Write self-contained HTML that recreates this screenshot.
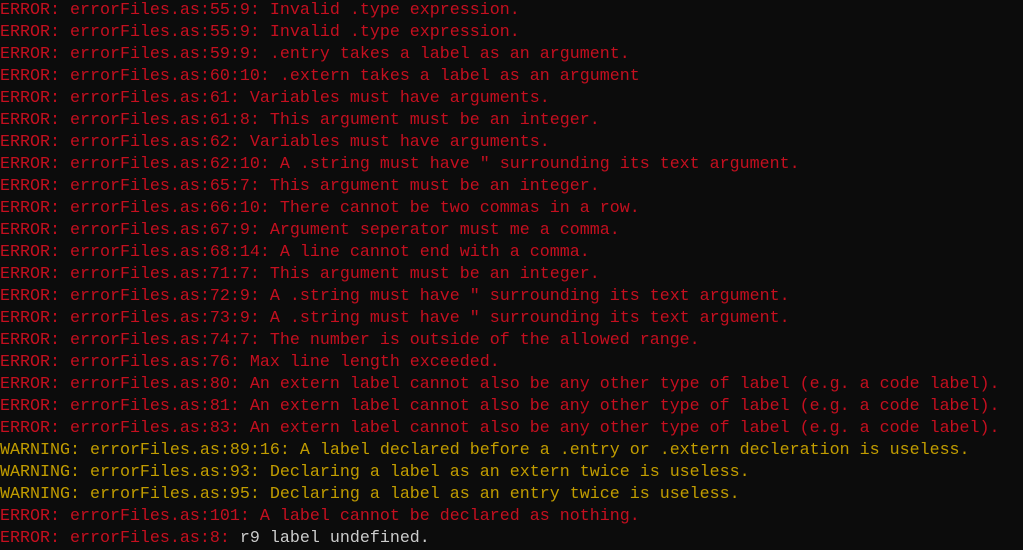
<!DOCTYPE html>
<html><head><meta charset="utf-8"><style>
html,body{margin:0;padding:0;background:#0c0c0c;width:1023px;height:550px;overflow:hidden}
pre{margin:0;position:absolute;left:0px;top:0px;font-family:"Liberation Mono",monospace;font-size:16.67px;line-height:22px;color:#c50f1f;white-space:pre}
.w{color:#c19c00}.n{color:#cccccc}
</style></head><body><pre>ERROR: errorFiles.as:55:9: Invalid .type expression.
ERROR: errorFiles.as:55:9: Invalid .type expression.
ERROR: errorFiles.as:59:9: .entry takes a label as an argument.
ERROR: errorFiles.as:60:10: .extern takes a label as an argument
ERROR: errorFiles.as:61: Variables must have arguments.
ERROR: errorFiles.as:61:8: This argument must be an integer.
ERROR: errorFiles.as:62: Variables must have arguments.
ERROR: errorFiles.as:62:10: A .string must have " surrounding its text argument.
ERROR: errorFiles.as:65:7: This argument must be an integer.
ERROR: errorFiles.as:66:10: There cannot be two commas in a row.
ERROR: errorFiles.as:67:9: Argument seperator must me a comma.
ERROR: errorFiles.as:68:14: A line cannot end with a comma.
ERROR: errorFiles.as:71:7: This argument must be an integer.
ERROR: errorFiles.as:72:9: A .string must have " surrounding its text argument.
ERROR: errorFiles.as:73:9: A .string must have " surrounding its text argument.
ERROR: errorFiles.as:74:7: The number is outside of the allowed range.
ERROR: errorFiles.as:76: Max line length exceeded.
ERROR: errorFiles.as:80: An extern label cannot also be any other type of label (e.g. a code label).
ERROR: errorFiles.as:81: An extern label cannot also be any other type of label (e.g. a code label).
ERROR: errorFiles.as:83: An extern label cannot also be any other type of label (e.g. a code label).
<span class="w">WARNING: errorFiles.as:89:16: A label declared before a .entry or .extern decleration is useless.
WARNING: errorFiles.as:93: Declaring a label as an extern twice is useless.
WARNING: errorFiles.as:95: Declaring a label as an entry twice is useless.</span>
ERROR: errorFiles.as:101: A label cannot be declared as nothing.
ERROR: errorFiles.as:8: <span class="n">r9 label undefined.</span></pre></body></html>
